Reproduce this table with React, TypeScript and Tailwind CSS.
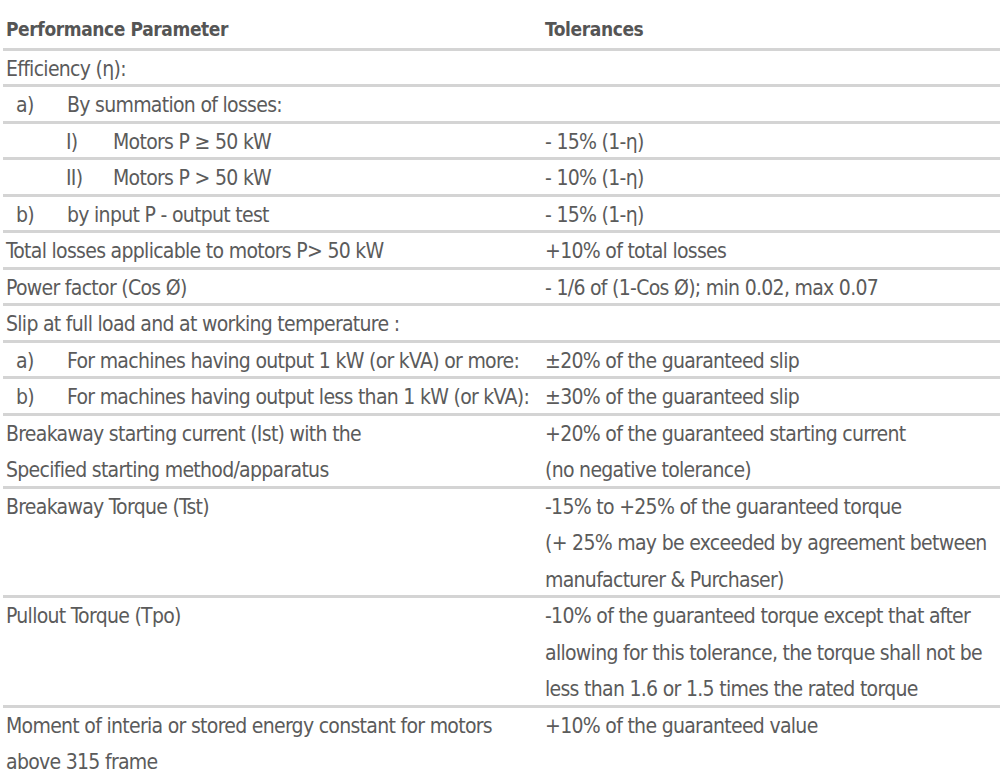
import React from 'react'

type Row = {
  left: React.ReactNode[]
  right: React.ReactNode[]
  label?: string
  indent?: 1 | 2
}

const rows: Row[] = [
  { left: ['Efficiency (η):'], right: [] },
  { indent: 1, label: 'a)', left: ['By summation of losses:'], right: [] },
  { indent: 2, label: 'I)', left: ['Motors P ≥ 50 kW'], right: ['- 15% (1-η)'] },
  { indent: 2, label: 'II)', left: ['Motors P > 50 kW'], right: ['- 10% (1-η)'] },
  { indent: 1, label: 'b)', left: ['by input P - output test'], right: ['- 15% (1-η)'] },
  { left: ['Total losses applicable to motors P> 50 kW'], right: ['+10% of total losses'] },
  { left: ['Power factor (Cos Ø)'], right: ['- 1/6 of (1-Cos Ø); min 0.02, max 0.07'] },
  { left: ['Slip at full load and at working temperature :'], right: [] },
  {
    indent: 1,
    label: 'a)',
    left: ['For machines having output 1 kW (or kVA) or more:'],
    right: ['±20% of the guaranteed slip'],
  },
  {
    indent: 1,
    label: 'b)',
    left: ['For machines having output less than 1 kW (or kVA):'],
    right: ['±30% of the guaranteed slip'],
  },
  {
    left: ['Breakaway starting current (Ist) with the', 'Specified starting method/apparatus'],
    right: ['+20% of the guaranteed starting current', '(no negative tolerance)'],
  },
  {
    left: ['Breakaway Torque (Tst)'],
    right: [
      '-15% to +25% of the guaranteed torque',
      '(+ 25% may be exceeded by agreement between',
      'manufacturer & Purchaser)',
    ],
  },
  {
    left: ['Pullout Torque (Tpo)'],
    right: [
      '-10% of the guaranteed torque except that after',
      'allowing for this tolerance, the torque shall not be',
      'less than 1.6 or 1.5 times the rated torque',
    ],
  },
  {
    left: ['Moment of interia or stored energy constant for motors', 'above 315 frame'],
    right: ['+10% of the guaranteed value'],
  },
]

function Lines({ lines }: { lines: React.ReactNode[] }) {
  return (
    <div>
      {lines.map((line, i) => (
        <div key={i}>{line}</div>
      ))}
    </div>
  )
}

function LeftCell({ row }: { row: Row }) {
  if (!row.indent) return <Lines lines={row.left} />

  return (
    <div className="flex">
      {row.indent === 1 ? (
        <span className="ml-[10px] w-[51px] shrink-0">{row.label}</span>
      ) : (
        <span className="ml-[60px] w-[47px] shrink-0">{row.label}</span>
      )}
      <Lines lines={row.left} />
    </div>
  )
}

export default function App() {
  return (
    <div
      className="w-[1000px] h-[782px] overflow-hidden bg-white pl-[3px] text-[21px] tracking-[-0.7px] text-[#5b5b5b] whitespace-nowrap"
      style={{ fontFamily: '"DejaVu Sans Condensed", "Liberation Sans", sans-serif' }}
    >
      <div className="grid grid-cols-[539px_1fr] pl-[3px] pt-[11px] pb-[3px] leading-[36.5px] text-[19px] tracking-[-0.4px] font-bold text-[#555] shadow-[inset_0_-3px_0_#d4d4d4]">
        <div>Performance Parameter</div>
        <div>Tolerances</div>
      </div>

      {rows.map((row, i) => (
        <div
          key={i}
          className={
            i === rows.length - 1
              ? 'grid grid-cols-[539px_1fr] pl-[3px] leading-[36.5px]'
              : 'grid grid-cols-[539px_1fr] pl-[3px] leading-[36.5px] shadow-[inset_0_-3px_0_#d4d4d4]'
          }
        >
          <LeftCell row={row} />
          <Lines lines={row.right} />
        </div>
      ))}
    </div>
  )
}
